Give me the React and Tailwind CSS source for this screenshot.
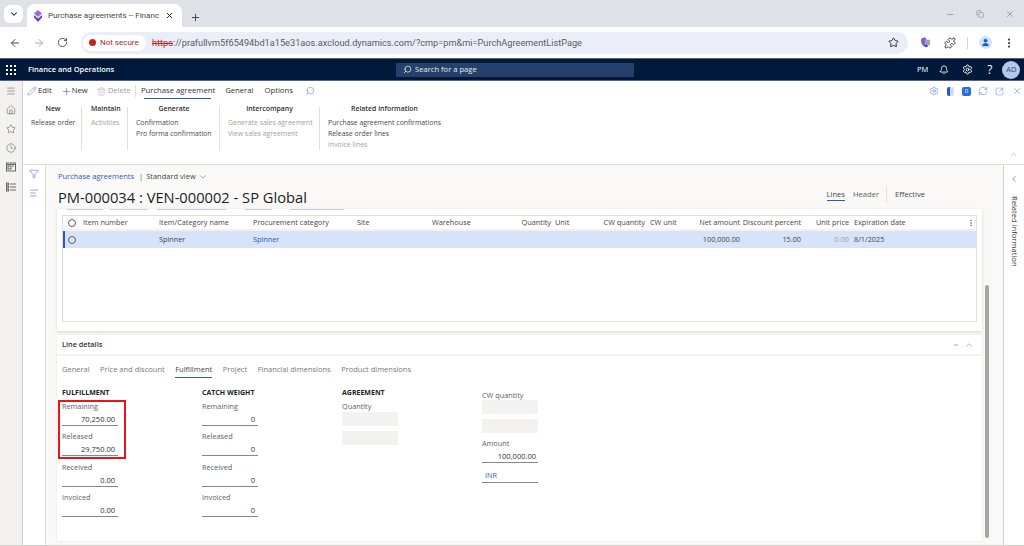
import { ArrowLeft, ArrowRight, RotateCw, Star, Puzzle, User, EllipsisVertical, ChevronDown, ChevronUp, ChevronLeft, X, Plus, Minus, Search, Bell, Settings, Pencil, Trash2, Menu, Home, Clock, Funnel, AlignLeft, Copy, RefreshCw, SquareArrowOutUpRight } from 'lucide-react';

const columns = [
  { label: 'Item number', value: '', width: 'w-[76px]' },
  { label: 'Item/Category name', value: 'Spinner', width: 'w-[94px]' },
  { label: 'Procurement category', value: 'Spinner', width: 'w-[104px]', link: true },
  { label: 'Site', value: '', width: 'w-[75px]' },
  { label: 'Warehouse', value: '', width: 'w-[75px]' },
  { label: 'Quantity', value: '', width: 'w-[44px] text-right' },
  { label: 'Unit', value: '', width: 'w-[49px] pl-[4px]' },
  { label: 'CW quantity', value: '', width: 'w-[45px] text-right' },
  { label: 'CW unit', value: '', width: 'w-[45px] pl-[5px]' },
  { label: 'Net amount', value: '100,000.00', width: 'w-[50px] text-right' },
  { label: 'Discount percent', value: '15.00', width: 'w-[61px] text-right' },
  { label: 'Unit price', value: '0.00', width: 'w-[48px] text-right', muted: true },
  { label: 'Expiration date', value: '8/1/2025', width: 'w-[100px] pl-[5px]' },
];

const ribbon = [
  { title: 'New', box: 'w-[55px] pl-[4px] pr-[6px] border-r', center: true, items: [['Release order']] },
  { title: 'Maintain', box: 'w-[46px] pl-[9px] border-r', items: [['Activities', true]] },
  { title: 'Generate', box: 'w-[92px] pl-[8px] pr-[7px] border-r', center: true, items: [['Confirmation'], ['Pro forma confirmation']] },
  { title: 'Intercompany', box: 'w-[100px] pl-[8px] pr-[8px] border-r', center: true, items: [['Generate sales agreement', true], ['View sales agreement', true]] },
  { title: 'Related information', box: 'w-[130px] pl-[8px] pr-[9px]', center: true, items: [['Purchase agreement confirmations'], ['Release order lines'], ['Invoice lines', true]] },
];

const detailTabs = ['General', 'Price and discount', 'Fulfillment', 'Project', 'Financial dimensions', 'Product dimensions'];

function Field({ label, value }) {
  return (
    <div className="h-[30.4px] w-[56px]">
      <div className="h-[13px] leading-[12px] text-[#605e5c]">{label}</div>
      <div className="h-[13px] border-b border-[#8a8886] pr-[3px] text-right text-[7.5px] leading-[12px] text-[#323130]">{value}</div>
    </div>
  );
}

function ShadedBox({ className = '' }) {
  return <div className={`h-[14px] w-[56px] bg-[#f3f2f1] ${className}`} />;
}

function Favicon() {
  return (
    <svg width="10" height="12" viewBox="0 0 10 12" className="shrink-0">
      <path d="M5 0l4 3.5L5 7 1 3.5z" fill="#a066e0" />
      <path d="M1 5l4 3.5L9 5v2.5L5 12 1 7.5z" fill="#6b3fb8" />
    </svg>
  );
}

function CopilotIcon() {
  return (
    <svg width="11" height="11" viewBox="0 0 12 12">
      <path d="M1 3c1-3 5-3 6-1L5 10c-2 1-4-4-4-7z" fill="#8a5ad0" />
      <path d="M5 3h6v6H6z" fill="#9aa5b8" />
      <path d="M4 9l3-1 2 2c-2 2-4 1-5-1z" fill="#3553b8" />
    </svg>
  );
}

function Browser() {
  return (
    <div className="font-['Roboto',sans-serif]">
      <div className="flex h-[27px] items-end bg-[#dee1e6] pl-[4px]">
        <div className="mb-[4px] flex h-[18px] w-[19px] items-center justify-center rounded-[6px] bg-white">
          <ChevronDown size={10} strokeWidth={2.5} className="text-[#1f1f1f]" />
        </div>
        <div className="ml-[4px] flex h-[23px] w-[155px] items-center rounded-t-[8px] bg-white pl-[6px] pr-[8px]">
          <Favicon />
          <span className="ml-[5px] whitespace-nowrap text-[8.1px] text-[#45474a]">Purchase agreements -- Financ</span>
          <X size={9} strokeWidth={2.5} className="ml-auto text-[#1f1f1f]" />
        </div>
        <Plus size={11} strokeWidth={2} className="mb-[4px] ml-[8px] text-[#3c4043]" />
        <div className="mb-[8px] ml-auto flex items-center gap-[21px] pr-[9px] text-[#8f9296]">
          <Minus size={9} />
          <Copy size={8} />
          <X size={10} />
        </div>
      </div>
      <div className="flex h-[32px] items-center border-b border-[#5f6368] bg-white pl-[9px]">
        <ArrowLeft size={12} className="text-[#44474a]" />
        <ArrowRight size={12} className="ml-[12px] text-[#a8abaf]" />
        <RotateCw size={11} className="ml-[12px] text-[#44474a]" />
        <div className="ml-[13px] flex h-[22px] w-[827px] items-center rounded-full bg-[#e9eef8] pl-[2px] pr-[9px]">
          <div className="flex h-[16px] w-[63px] items-center gap-[4px] rounded-full bg-white pl-[6px]">
            <span className="h-[7px] w-[7px] rounded-full bg-[#c5221f]" />
            <span className="whitespace-nowrap text-[8px] text-[#b3261e]">Not secure</span>
          </div>
          <div className="ml-[6px] whitespace-nowrap text-[9.2px] text-[#5a5d61]">
            <span className="text-[#c5221f] line-through">https</span>://prafullvm5f65494bd1a15e31aos.axcloud.dynamics.com/?cmp=pm&amp;mi=PurchAgreementListPage
          </div>
          <Star size={11} strokeWidth={2} className="ml-auto text-[#1f1f1f]" />
        </div>
        <div className="ml-[12px] flex items-center"><CopilotIcon /></div>
        <Puzzle size={12} strokeWidth={2} className="ml-[13px] text-[#3c4043]" />
        <div className="ml-[11px] h-[12px] w-px bg-[#c9d4e8]" />
        <div className="ml-[11px] flex h-[13px] w-[13px] items-center justify-center rounded-full bg-[#d3e3fd]">
          <User size={9} fill="#0b57d0" className="text-[#0b57d0]" />
        </div>
        <EllipsisVertical size={12} strokeWidth={2.5} className="ml-[11px] text-[#3c4043]" />
      </div>
    </div>
  );
}

function NavBar() {
  return (
    <div className="flex h-[22px] items-center border-b border-[#54627a] bg-[#00183a] pl-[6px] text-white">
      <div className="grid w-[10px] shrink-0 grid-cols-3 gap-[2px]">
        {Array.from({ length: 9 }).map((_, i) => <span key={i} className="h-[2px] w-[2px] bg-white" />)}
      </div>
      <span className="ml-[12px] w-[368px] shrink-0 whitespace-nowrap text-[7.5px] font-semibold">Finance and Operations</span>
      <div className="flex h-[14px] w-[238px] shrink-0 items-center bg-[#25406a] pl-[7px] text-[#e8ebf0]">
        <Search size={9} className="-scale-x-100" />
        <span className="ml-[3px] text-[7.6px]">Search for a page</span>
      </div>
      <span className="ml-[283px] text-[7.5px]">PM</span>
      <Bell size={10} className="ml-[11px]" />
      <Settings size={11} className="ml-[13px]" />
      <span className="ml-[14px] text-[12px] leading-none">?</span>
      <div className="ml-[10px] flex h-[18px] w-[18px] items-center justify-center rounded-full bg-[#b4c7ec] text-[7.5px] text-[#3c4a63]">AD</div>
    </div>
  );
}

function Ribbon() {
  return (
    <div className="h-[84px] border-b border-[#e1dfdd] bg-white pl-[4px] text-[#323130]">
      <div className="flex h-[20px] items-center text-[7.7px]">
        <Pencil size={10} strokeWidth={1.2} className="text-[#4f6bed]" />
        <span className="ml-[1px]">Edit</span>
        <Plus size={11} strokeWidth={1.2} className="ml-[9px] text-[#2b58c8]" />
        <span>New</span>
        <Trash2 size={9} strokeWidth={1.2} className="ml-[9px] text-[#a19f9d]" />
        <span className="ml-[2px] text-[#a19f9d]">Delete</span>
        <div className="ml-[4px] h-[12px] w-px bg-[#e1dfdd]" />
        <div className="relative ml-[5px] flex h-[20px] items-center">
          Purchase agreement
          <span className="absolute bottom-[2px] left-[3px] right-[4px] h-[1px] bg-[#2b58c8]" />
        </div>
        <span className="ml-[10px]">General</span>
        <span className="ml-[11px]">Options</span>
        <Search size={10} strokeWidth={1.2} className="ml-[12px] -scale-x-100 text-[#4f6bed]" />
        <div className="ml-auto flex items-center gap-[7px] pr-[2px] text-[#4f7bed]">
          <Settings size={10} strokeWidth={1.3} />
          <span className="mx-[1px] h-[9px] w-[7px] rounded-[2px] border-l-[3px] border-[#2b58c8] bg-[#cfdcf8]" />
          <span className="flex h-[9px] w-[9px] items-center justify-center rounded-[2px] bg-[#2b6be0] text-[6px] text-white">0</span>
          <RefreshCw size={10} strokeWidth={1.3} />
          <SquareArrowOutUpRight size={9} strokeWidth={1.3} />
          <X size={10} strokeWidth={1.3} className="ml-[1px]" />
        </div>
      </div>
      <div className="mt-[6px] flex text-[6.9px]">
        {ribbon.map((group) => (
          <div key={group.title} className={`h-[43px] border-[#e1dfdd] ${group.box}`}>
            <div className={`whitespace-nowrap font-semibold leading-[4px] ${group.center ? 'text-center' : ''}`}>{group.title}</div>
            <div className="mt-[6px]">
              {group.items.map(([name, disabled]) => (
                <div key={name} className={`h-[11px] whitespace-nowrap leading-[11px] ${disabled ? 'text-[#a19f9d]' : 'text-[#484644]'}`}>{name}</div>
              ))}
            </div>
          </div>
        ))}
      </div>
      <div className="flex justify-end pr-[6px]">
        <ChevronUp size={9} strokeWidth={1.2} className="text-[#8a8886]" />
      </div>
    </div>
  );
}

function LeftRail() {
  return (
    <div className="flex w-[23px] shrink-0 flex-col items-center gap-[9px] border-r border-[#d2d0ce] bg-[#f3f2f1] pt-[5px] text-[#484644]">
      <Menu size={10} strokeWidth={1.2} />
      <Home size={10} strokeWidth={1.2} />
      <Star size={10} strokeWidth={1.2} />
      <Clock size={10} strokeWidth={1.2} />
      <svg width="10" height="10" viewBox="0 0 10 10" fill="none" stroke="currentColor" strokeWidth="0.8"><rect x="0.5" y="1" width="9" height="8" /><rect x="2" y="4" width="3" height="3" /><path d="M1 2.5h8M6 4h2" /></svg>
      <svg width="10" height="10" viewBox="0 0 10 10" fill="none" stroke="currentColor" strokeWidth="0.8" className="mt-[1px]"><rect x="0.5" y="1" width="2" height="2" /><rect x="0.5" y="4" width="2" height="2" /><rect x="0.5" y="7" width="2" height="2" /><path d="M4 2h6M4 5h6M4 8h6" /></svg>
    </div>
  );
}

function LinesTable() {
  return (
    <div className="mx-[5px] h-[107px] border border-[#e1dfdd] bg-white text-[7.3px]">
      <div className="flex h-[15px] items-center border-b-2 border-[#f3f2f1] font-medium text-[#484644]">
        <span className="flex w-[20px] justify-center pr-[2px]"><span className="h-[8px] w-[8px] rounded-full border border-[#605e5c]" /></span>
        {columns.map((c) => <div key={c.label} className={`shrink-0 whitespace-nowrap ${c.width}`}>{c.label}</div>)}
        <EllipsisVertical size={8} className="ml-[18px] text-[#605e5c]" />
      </div>
      <div className="flex h-[17px] items-center border-l-2 border-[#2b58c8] bg-[#d6e3f8] text-[#484644]">
        <span className="-ml-[2px] flex w-[20px] justify-center pr-[2px]"><span className="h-[8px] w-[8px] rounded-full border border-[#605e5c]" /></span>
        {columns.map((c) => (
          <div key={c.label} className={`shrink-0 whitespace-nowrap ${c.width} ${c.link ? 'text-[#2b58c8]' : ''} ${c.muted ? 'text-[#a19f9d]' : ''}`}>{c.value}</div>
        ))}
      </div>
    </div>
  );
}

function LineDetails() {
  return (
    <div className="mt-[4px] h-[206px] bg-white pl-[5px] text-[7.3px] shadow-[0_0_2px_rgba(0,0,0,0.1)]">
      <div className="-ml-[5px] flex h-[21px] items-center border-b-2 border-[#f3f2f1] pl-[5px] pr-[8px]">
        <span className="font-semibold text-[#323130]">Line details</span>
        <Minus size={6} className="ml-auto text-[#605e5c]" />
        <ChevronUp size={10} strokeWidth={1} className="ml-[5px] text-[#605e5c]" />
      </div>
      <div className="mt-[5px] flex h-[18px] gap-[10.5px] text-[7.5px] text-[#7a7876]">
        {detailTabs.map((tab) => (
          <div key={tab} className={`h-[17px] whitespace-nowrap leading-[17px] ${tab === 'Fulfillment' ? 'border-b border-[#2b58c8] text-[#484644]' : ''}`}>{tab}</div>
        ))}
      </div>
      <div className="mt-[8px] flex">
        <div className="w-[140px]">
          <div className="mb-[2px] h-[11px] text-[7px] font-bold leading-[11px] text-[#201f1e]">FULFILLMENT</div>
          <div className="-ml-[4px] mb-[1.8px] h-[59px] w-[68px] pl-[4px] outline-2 -outline-offset-2 outline-[#e8141c]">
            <Field label="Remaining" value="70,250.00" />
            <Field label="Released" value="29,750.00" />
          </div>
          <Field label="Received" value="0.00" />
          <Field label="Invoiced" value="0.00" />
        </div>
        <div className="w-[140px]">
          <div className="mb-[2px] h-[11px] text-[7px] font-bold leading-[11px] text-[#201f1e]">CATCH WEIGHT</div>
          <Field label="Remaining" value="0" />
          <Field label="Released" value="0" />
          <Field label="Received" value="0" />
          <Field label="Invoiced" value="0" />
        </div>
        <div className="w-[140px]">
          <div className="mb-[2px] h-[11px] text-[7px] font-bold leading-[11px] text-[#201f1e]">AGREEMENT</div>
          <div className="h-[12px] leading-[12px] text-[#605e5c]">Quantity</div>
          <ShadedBox />
          <ShadedBox className="mt-[5px]" />
        </div>
        <div className="w-[56px] pt-[2px]">
          <div className="h-[11px] leading-[12px] text-[#605e5c]">CW quantity</div>
          <ShadedBox />
          <ShadedBox className="mt-[5px]" />
          <div className="mt-[4px] h-[13px] leading-[13px] text-[#605e5c]">Amount</div>
          <div className="h-[13px] border-b border-[#8a8886] pr-[2px] text-right text-[7.5px] leading-[12px] text-[#323130]">100,000.00</div>
          <div className="mt-[6px] h-[14px] border-b border-[#8a8886] pl-[3px] leading-[13px] text-[#2b58c8]">INR</div>
        </div>
      </div>
    </div>
  );
}

function Content() {
  return (
    <div className="relative flex min-w-0 flex-1 flex-col bg-[#faf9f8] pl-[11px] pr-[21px]">
      <div className="mt-[7px] flex h-[10px] items-center pl-[1px] text-[7.5px] leading-none">
        <span className="text-[#2b58c8]">Purchase agreements</span>
        <span className="ml-[5px] text-[#605e5c]">|</span>
        <span className="ml-[3px] text-[#484644]">Standard view</span>
        <ChevronDown size={10} strokeWidth={1.2} className="ml-[2px] text-[#484644]" />
      </div>
      <div className="mt-[5px] flex h-[20px] items-center pl-[1px]">
        <span className="whitespace-nowrap text-[14.7px] font-medium text-[#201f1e]">PM-000034 : VEN-000002 - SP Global</span>
        <div className="-mt-[4px] ml-auto flex items-center pr-[57px] text-[7.6px] text-[#605e5c]">
          <span className="border-b border-[#2b58c8] font-medium text-[#484644]">Lines</span>
          <span className="ml-[8px]">Header</span>
          <span className="ml-[7px] h-[16px] w-px bg-[#e1dfdd]" />
          <span className="ml-[8px] text-[#484644]">Effective</span>
        </div>
      </div>
      <div className="mt-[2px] h-[122px] bg-white shadow-[0_1px_3px_rgba(0,0,0,0.15)]">
        {/* bottom edge of the scrolled-away action row, only a sliver is visible */}
        <div className="flex h-[6px] items-start pl-[10px]">
          <span className="h-px w-[36px] bg-[#c3cdea]" />
          <span className="ml-[7px] h-px w-[38px] bg-[#d5d8e2]" />
          <span className="ml-[9px] h-px w-[69px] bg-[#c3cdea]" />
          <span className="ml-[19px] h-px w-[27px] bg-[#c3cdea]" />
          <span className="ml-[18px] h-px w-[54px] bg-[#c3cdea]" />
        </div>
        <LinesTable />
      </div>
      <LineDetails />
      <div className="absolute bottom-[7px] right-[14px] h-[253px] w-[4px] rounded-full bg-[#a6a6a6]" />
    </div>
  );
}

function RelatedPane() {
  return (
    <div className="flex w-[21px] shrink-0 flex-col items-center border-l border-[#d2d0ce] bg-white pt-[9px]">
      <ChevronLeft size={10} strokeWidth={1.2} className="text-[#484644]" />
      <span className="ml-[1px] mt-[12px] whitespace-nowrap text-[7.6px] font-medium text-[#323130] [writing-mode:vertical-rl]">Related information</span>
    </div>
  );
}

export default function App() {
  return (
    <div className="flex h-[546px] w-[1024px] flex-col overflow-hidden bg-white font-['Open_Sans',sans-serif]">
      <Browser />
      <NavBar />
      <div className="flex min-h-0 flex-1 border-b border-[#d2d0ce]">
        <LeftRail />
        <div className="flex min-w-0 flex-1 flex-col">
          <Ribbon />
          <div className="flex min-h-0 flex-1">
            <div className="flex w-[23px] shrink-0 flex-col items-center gap-[9px] border-r border-[#e1dfdd] bg-white pt-[4px]">
              <Funnel size={10} strokeWidth={1.2} className="text-[#2b58c8]" />
              <AlignLeft size={10} strokeWidth={1.2} className="text-[#2b58c8]" />
            </div>
            <Content />
            <RelatedPane />
          </div>
        </div>
      </div>
    </div>
  );
}
